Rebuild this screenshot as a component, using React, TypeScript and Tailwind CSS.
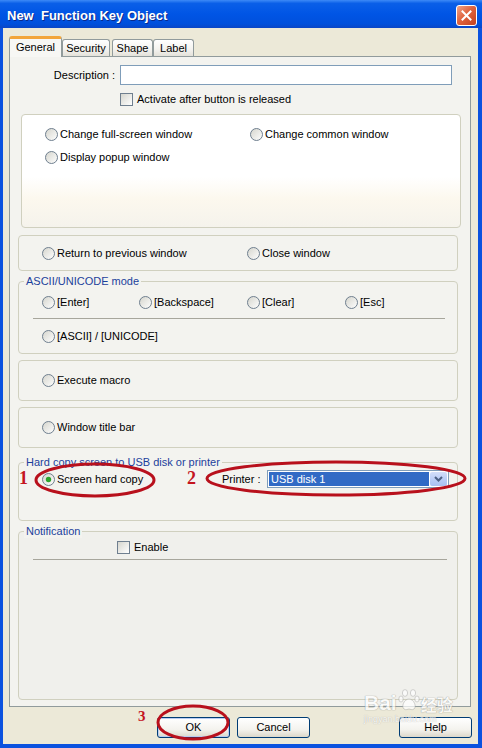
import React from "react";

const SANS = { fontFamily: '"Liberation Sans", Arial, sans-serif' };

function Radio({ checked = false }: { checked?: boolean }) {
  return (
    <svg width="13" height="13" viewBox="0 0 13 13" className="shrink-0 block">
      <defs>
        <linearGradient id="radfill" x1="0" y1="0" x2="1" y2="1">
          <stop offset="0" stopColor="#d4d4cc" />
          <stop offset="1" stopColor="#ffffff" />
        </linearGradient>
      </defs>
      <circle cx="6.5" cy="6.5" r="6" fill="url(#radfill)" stroke="#6f7f8f" strokeWidth="1" />
      {checked && <circle cx="6.5" cy="6.5" r="2.7" fill="#2ca52c" />}
    </svg>
  );
}

function RadioItem({ label, checked = false, className = "" }: { label: string; checked?: boolean; className?: string }) {
  return (
    <div className={`flex items-center gap-[2px] text-[11px] leading-[13px] text-black ${className}`}>
      <Radio checked={checked} />
      <span className="whitespace-nowrap">{label}</span>
    </div>
  );
}

function Check({ label }: { label: string }) {
  return (
    <div className="flex items-center gap-[4px] text-[11px] leading-[13px] text-black">
      <div className="w-[13px] h-[13px] shrink-0 border border-[#6f7f8f] bg-[linear-gradient(135deg,#d6d6ce_0%,#ffffff_100%)]" />
      <span className="whitespace-nowrap">{label}</span>
    </div>
  );
}

function Legend({ text }: { text: string }) {
  return (
    <span className="absolute left-[5px] top-[-8px] px-[2px] bg-[#f3f3ef] text-[11px] leading-[14px] text-[#1c3f9c] whitespace-nowrap">
      {text}
    </span>
  );
}

function XPButton({ label, isDefault = false, className = "" }: { label: string; isDefault?: boolean; className?: string }) {
  return (
    <div
      className={`w-[73px] h-[21px] rounded-[3px] border border-[#003c74] bg-[linear-gradient(to_bottom,#ffffff_0%,#f4f3ee_60%,#dcd8ca_100%)] flex items-center justify-center text-[11px] text-black ${
        isDefault ? "shadow-[inset_0_0_0_1px_#b8cbf2]" : ""
      } ${className}`}
    >
      {label}
    </div>
  );
}

export default function App() {
  return (
    <div className="relative w-[482px] h-[748px] overflow-hidden bg-[#0b52df] flex flex-col" style={SANS}>
      {/* Title bar */}
      <div className="h-[28px] shrink-0 flex items-center justify-between pl-[7px] pr-[5px] bg-[linear-gradient(to_bottom,#3d8af7_0%,#0a5fe8_12%,#0055e5_50%,#0050dc_85%,#0a46c6_100%)]">
        <span className="mt-[4px] whitespace-pre text-white font-bold text-[13px] [text-shadow:1px_1px_0_#0b2a8c]">New  Function Key Object</span>
        <div className="mt-[3px] w-[21px] h-[21px] rounded-[3px] border border-white bg-[linear-gradient(135deg,#f0a488_0%,#e0643f_45%,#c2401f_100%)] flex items-center justify-center">
          <svg width="11" height="11" viewBox="0 0 11 11">
            <path d="M1.5 1.5 L9.5 9.5 M9.5 1.5 L1.5 9.5" stroke="#ffffff" strokeWidth="2" strokeLinecap="square" />
          </svg>
        </div>
      </div>

      {/* Body */}
      <div className="flex-1 flex flex-col pl-[3px] pr-[4px] pb-[4px]">
        <div className="flex-1 bg-[#ece9d8] flex flex-col pt-[8px]">
          <div className="ml-[6px] w-[462px] flex flex-col">
            {/* Tabs */}
            <div className="h-[20px] flex items-end relative z-10">
              <div className="w-[53px] h-[21px] -mb-[1px] rounded-t-[3px] border-x border-[#919b9c] border-t-[3px] border-t-[#f2a53a] bg-[#f7f7f4] flex items-start justify-center pt-[2px] text-[11px] leading-[13px] text-black">
                General
              </div>
              <div className="w-[48px] h-[17px] rounded-t-[3px] border-x border-t border-[#919b9c] bg-[linear-gradient(to_bottom,#ffffff_0%,#f3f2ee_60%,#e4e2da_100%)] flex items-center justify-center text-[11px] text-black">
                Security
              </div>
              <div className="ml-[2px] w-[41px] h-[17px] rounded-t-[3px] border-x border-t border-[#919b9c] bg-[linear-gradient(to_bottom,#ffffff_0%,#f3f2ee_60%,#e4e2da_100%)] flex items-center justify-center text-[11px] text-black">
                Shape
              </div>
              <div className="w-[41px] h-[17px] rounded-t-[3px] border-x border-t border-[#919b9c] bg-[linear-gradient(to_bottom,#ffffff_0%,#f3f2ee_60%,#e4e2da_100%)] flex items-center justify-center text-[11px] text-black">
                Label
              </div>
            </div>

            {/* Panel */}
            <div className="h-[651px] border border-[#919b9c] bg-[#f3f3ef] flex flex-col">
              {/* Description */}
              <div className="mt-[8px] h-[20px] flex items-center">
                <span className="w-[105px] text-right text-[11px] text-black">Description :</span>
                <div className="ml-[5px] w-[332px] h-[20px] border border-[#7f9db9] bg-white" />
              </div>
              <div className="mt-[8px] ml-[110px] h-[13px] flex items-center">
                <Check label="Activate after button is released" />
              </div>

              {/* Group 1 */}
              <div className="mt-[8px] ml-[11px] w-[440px] h-[114px] rounded-[4px] border border-[#d0d0bf] bg-[linear-gradient(to_bottom,#ffffff_0%,#ffffff_55%,#fcf8ee_75%,#f5f3ec_100%)] pt-[13px] pl-[23px] flex flex-col">
                <div className="flex h-[13px]">
                  <RadioItem label="Change full-screen window" className="w-[205px]" />
                  <RadioItem label="Change common window" />
                </div>
                <div className="flex h-[13px] mt-[10px]">
                  <RadioItem label="Display popup window" />
                </div>
              </div>

              {/* Group 2 */}
              <div className="mt-[7px] ml-[8px] w-[440px] h-[36px] rounded-[4px] border border-[#d0d0bf] pl-[23px] flex items-center">
                <RadioItem label="Return to previous window" className="w-[205px]" />
                <RadioItem label="Close window" />
              </div>

              {/* Group 3 ASCII */}
              <div className="relative mt-[10px] ml-[8px] w-[440px] h-[73px] rounded-[4px] border border-[#d0d0bf] pt-[14px] flex flex-col">
                <Legend text="ASCII/UNICODE mode" />
                <div className="flex h-[13px] pl-[23px]">
                  <RadioItem label="[Enter]" className="w-[97px]" />
                  <RadioItem label="[Backspace]" className="w-[108px]" />
                  <RadioItem label="[Clear]" className="w-[98px]" />
                  <RadioItem label="[Esc]" />
                </div>
                <div className="mt-[9px] ml-[14px] w-[412px] h-px bg-[#a7a69c]" />
                <div className="flex h-[13px] pl-[23px] mt-[11px]">
                  <RadioItem label="[ASCII] / [UNICODE]" />
                </div>
              </div>

              {/* Group 4 */}
              <div className="mt-[6px] ml-[8px] w-[440px] h-[41px] rounded-[4px] border border-[#d0d0bf] pl-[23px] flex items-center">
                <RadioItem label="Execute macro" />
              </div>

              {/* Group 5 */}
              <div className="mt-[6px] ml-[8px] w-[440px] h-[41px] rounded-[4px] border border-[#d0d0bf] pl-[23px] flex items-center">
                <RadioItem label="Window title bar" />
              </div>

              {/* Group 6 Hard copy */}
              <div className="relative mt-[14px] ml-[8px] w-[440px] h-[59px] rounded-[4px] border border-[#d0d0bf] pt-[7px] pl-[23px] flex flex-col">
                <Legend text="Hard copy screen to USB disk or printer" />
                <div className="flex items-center h-[18px]">
                  <RadioItem label="Screen hard copy" checked className="w-[180px]" />
                  <span className="w-[45px] text-[11px] text-black whitespace-nowrap">Printer :</span>
                  <div className="w-[182px] h-[18px] border border-[#7f9db9] bg-white flex items-stretch p-px">
                    <div className="flex-1 bg-[#316ac5] text-white text-[11px] leading-[14px] pl-[2px] flex items-center">USB disk 1</div>
                    <div className="w-[17px] ml-px rounded-[2px] bg-[linear-gradient(to_bottom,#d3def9_0%,#b7cbf6_60%,#a9c0f1_100%)] flex items-center justify-center">
                      <svg width="9" height="6" viewBox="0 0 9 6">
                        <path d="M1 1 L4.5 4.5 L8 1" stroke="#4d6185" strokeWidth="2" fill="none" />
                      </svg>
                    </div>
                  </div>
                </div>
              </div>

              {/* Group 7 Notification */}
              <div className="relative mt-[10px] mb-[6px] ml-[8px] w-[440px] flex-1 rounded-[4px] border border-[#d0d0bf] bg-[#f0f0ec] pt-[9px] flex flex-col">
                <Legend text="Notification" />
                <div className="ml-[98px] h-[13px] flex items-center">
                  <Check label="Enable" />
                </div>
                <div className="mt-[5px] ml-[14px] w-[414px] h-px bg-[#a7a69c]" />
              </div>
            </div>
          </div>

          {/* Buttons */}
          <div className="mt-[10px] flex">
            <XPButton label="OK" isDefault className="ml-[154px]" />
            <XPButton label="Cancel" className="ml-[7px]" />
            <XPButton label="Help" className="ml-[89px]" />
          </div>
        </div>
      </div>

      {/* Watermark */}
      <div className="absolute left-[364px] top-[688px] pointer-events-none flex flex-col items-start opacity-70">
        <div className="flex items-end">
          <span className="text-[21px] font-bold leading-[22px] text-white [text-shadow:0_0_1px_#8c8c8c,0_0_1px_#8c8c8c]">Bai</span>
          <svg width="22" height="26" viewBox="0 0 22 26" className="mx-[1px]">
            <g fill="#ffffff" stroke="#9a9a9a" strokeWidth="0.6">
              <ellipse cx="7" cy="5" rx="2.6" ry="3.4" />
              <ellipse cx="15" cy="5" rx="2.6" ry="3.4" />
              <ellipse cx="3" cy="11" rx="2.2" ry="3" />
              <ellipse cx="19" cy="11" rx="2.2" ry="3" />
              <path d="M11 11 C6 11 3 19 6 21 C8 22.5 10 21 11 21 C12 21 14 22.5 16 21 C19 19 16 11 11 11 Z" />
            </g>
          </svg>
          <span className="text-[16px] font-bold leading-[20px] text-white [text-shadow:0_0_1px_#8c8c8c,0_0_1px_#8c8c8c]" style={{ fontFamily: '"Noto Sans CJK SC", sans-serif' }}>经验</span>
        </div>
        <span className="text-[9px] leading-[10px] text-white [text-shadow:0_0_1px_#8c8c8c]">jingyan.baidu.com</span>
      </div>

      {/* Red annotations */}
      <svg className="absolute left-0 top-0 pointer-events-none" width="482" height="748" viewBox="0 0 482 748">
        <g fill="none" stroke="#b8101c" strokeWidth="3">
          <ellipse cx="95" cy="480" rx="59" ry="16" />
          <ellipse cx="336" cy="478.5" rx="129" ry="16.5" />
          <ellipse cx="193" cy="722.5" rx="35" ry="16.5" />
        </g>
      </svg>
      <span className="absolute left-[19px] top-[469px] text-[18px] leading-[18px] font-bold text-[#c4141e]" style={{ fontFamily: '"Liberation Serif", serif' }}>1</span>
      <span className="absolute left-[187px] top-[469px] text-[18px] leading-[18px] font-bold text-[#c4141e]" style={{ fontFamily: '"Liberation Serif", serif' }}>2</span>
      <span className="absolute left-[138px] top-[709px] text-[15px] leading-[15px] font-bold text-[#c4141e]" style={{ fontFamily: '"Liberation Serif", serif' }}>3</span>
    </div>
  );
}
